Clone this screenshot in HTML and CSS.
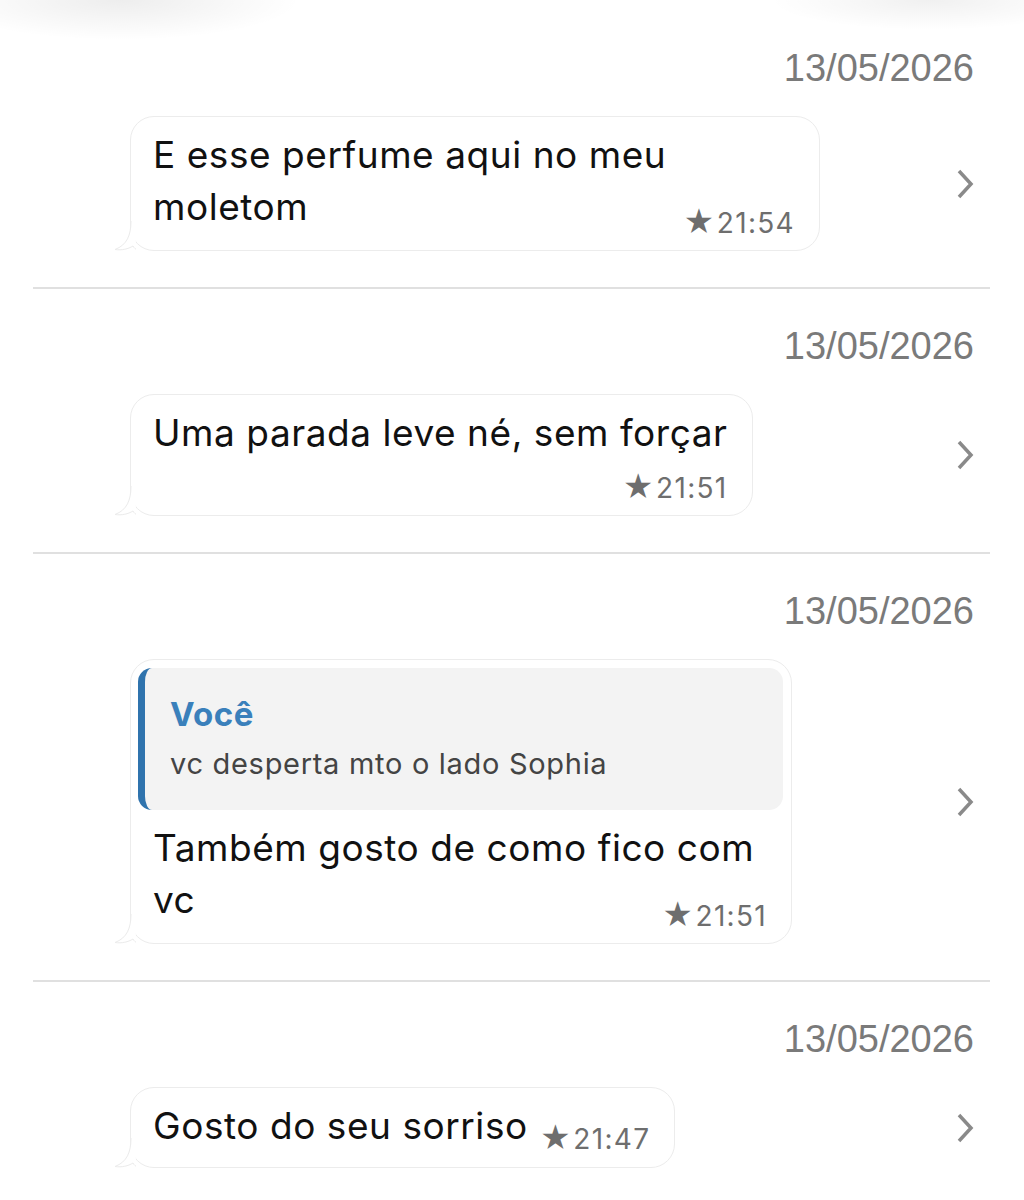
FILE: index.html
```html
<!DOCTYPE html>
<html>
<head>
<meta charset="utf-8">
<title>Mensagens favoritas</title>
<link rel="stylesheet" href="styles.css">
</head>
<body>
<div class="haze"></div>
<main class="list">
    <section class="item">
        <div class="date">13/05/2026</div>
        <div class="row">
            <div class="bubble wide">
                <svg class="tail" width="22" height="30" viewBox="0 0 22 30"><path d="M17 0 C17 14 13 24 1 28.5 C8 29.5 14 28 19 25 C20 27 22 28.5 24 29.5" fill="#fff" stroke="#ebebeb" stroke-width="1"/></svg>
                <div class="text">E esse perfume aqui no meu<br>moletom</div>
                <div class="meta overlap"><span class="star">★</span>21:54</div>
            </div>
            <svg class="chevron" width="18" height="30" viewBox="0 0 18 30"><path d="M3 2 L15 15 L3 28" fill="none" stroke="#8a8a8a" stroke-width="3.5"/></svg>
        </div>
    </section>
    <hr>
    <section class="item">
        <div class="date">13/05/2026</div>
        <div class="row">
            <div class="bubble">
                <svg class="tail" width="22" height="30" viewBox="0 0 22 30"><path d="M17 0 C17 14 13 24 1 28.5 C8 29.5 14 28 19 25 C20 27 22 28.5 24 29.5" fill="#fff" stroke="#ebebeb" stroke-width="1"/></svg>
                <div class="text">Uma parada leve né, sem forçar</div>
                <div class="meta below"><span class="star">★</span>21:51</div>
            </div>
            <svg class="chevron" width="18" height="30" viewBox="0 0 18 30"><path d="M3 2 L15 15 L3 28" fill="none" stroke="#8a8a8a" stroke-width="3.5"/></svg>
        </div>
    </section>
    <hr>
    <section class="item">
        <div class="date">13/05/2026</div>
        <div class="row">
            <div class="bubble reply">
                <svg class="tail" width="22" height="30" viewBox="0 0 22 30"><path d="M17 0 C17 14 13 24 1 28.5 C8 29.5 14 28 19 25 C20 27 22 28.5 24 29.5" fill="#fff" stroke="#ebebeb" stroke-width="1"/></svg>
                <div class="quote">
                    <div class="quote-name">Você</div>
                    <div class="quote-text">vc desperta mto o lado Sophia</div>
                </div>
                <div class="text after-quote">Também gosto de como fico com<br>vc</div>
                <div class="meta overlap"><span class="star">★</span>21:51</div>
            </div>
            <svg class="chevron" width="18" height="30" viewBox="0 0 18 30"><path d="M3 2 L15 15 L3 28" fill="none" stroke="#8a8a8a" stroke-width="3.5"/></svg>
        </div>
    </section>
    <hr>
    <section class="item">
        <div class="date">13/05/2026</div>
        <div class="row">
            <div class="bubble inline">
                <svg class="tail" width="22" height="30" viewBox="0 0 22 30"><path d="M17 0 C17 14 13 24 1 28.5 C8 29.5 14 28 19 25 C20 27 22 28.5 24 29.5" fill="#fff" stroke="#ebebeb" stroke-width="1"/></svg>
                <div class="text">Gosto do seu sorriso</div>
                <div class="meta"><span class="star">★</span>21:47</div>
            </div>
            <svg class="chevron" width="18" height="30" viewBox="0 0 18 30"><path d="M3 2 L15 15 L3 28" fill="none" stroke="#8a8a8a" stroke-width="3.5"/></svg>
        </div>
    </section>
</main>
</body>
</html>
```

FILE: styles.css
```css
body {
    margin: 0;
    background: #fff;
    font-family: Inter, "Liberation Sans", sans-serif;
    color: #111;
    position: relative;
}

.haze {
    position: absolute;
    top: 0;
    left: 0;
    right: 0;
    height: 60px;
    background:
        radial-gradient(ellipse 180px 40px at 120px 0, rgba(0, 0, 0, 0.07), transparent),
        radial-gradient(ellipse 160px 30px at 930px 0, rgba(0, 0, 0, 0.06), transparent);
    pointer-events: none;
}

.list {
    padding-top: 46px;
}

.item {
    display: flex;
    flex-direction: column;
}

.date {
    align-self: flex-end;
    margin-right: 50px;
    font-family: "Liberation Sans", sans-serif;
    font-size: 38px;
    line-height: 44px;
    color: #7a7a7a;
}

.row {
    display: flex;
    align-items: center;
    padding-left: 130px;
    margin-top: 26px;
}

.bubble {
    position: relative;
    box-sizing: border-box;
    border: 1px solid #ececec;
    border-radius: 24px;
    padding: 12px 24px 12px 22px;
    background: #fff;
}

.bubble.wide {
    width: 690px;
}

.bubble.reply {
    width: 662px;
}

.tail {
    position: absolute;
    left: -17px;
    bottom: -1px;
}

.text {
    font-size: 37px;
    line-height: 52px;
    letter-spacing: 0.55px;
    white-space: nowrap;
}

.meta {
    font-size: 28px;
    line-height: 30px;
    letter-spacing: 1.3px;
    color: #6e6e6e;
    text-align: right;
    white-space: nowrap;
}

.star {
    font-size: 30px;
    margin-right: 1px;
}

.meta.overlap {
    margin-top: -26px;
}

.meta.below {
    margin-top: 13px;
}

.bubble.inline {
    display: flex;
    align-items: flex-end;
    gap: 12px;
    padding-bottom: 15px;
}

.bubble.inline .meta {
    margin-bottom: -2px;
}

.quote {
    margin: -4px -16px 0 -15px;
    padding: 24px 25px 26px 25px;
    background: #f3f3f3;
    border-left: 7px solid #2f73ad;
    border-radius: 14px;
}

.quote-name {
    font-size: 33px;
    line-height: 44px;
    letter-spacing: 0.5px;
    font-weight: 700;
    color: #3a80bb;
}

.quote-text {
    margin-top: 8px;
    font-size: 29px;
    line-height: 40px;
    letter-spacing: 0.7px;
    color: #444;
}

.after-quote {
    margin-top: 12px;
}

.chevron {
    margin-left: auto;
    margin-right: 50px;
}

hr {
    margin: 36px 34px 0 33px;
    height: 2px;
    border: none;
    background: #e0e0e0;
}

hr + .item {
    margin-top: 35px;
}
```
